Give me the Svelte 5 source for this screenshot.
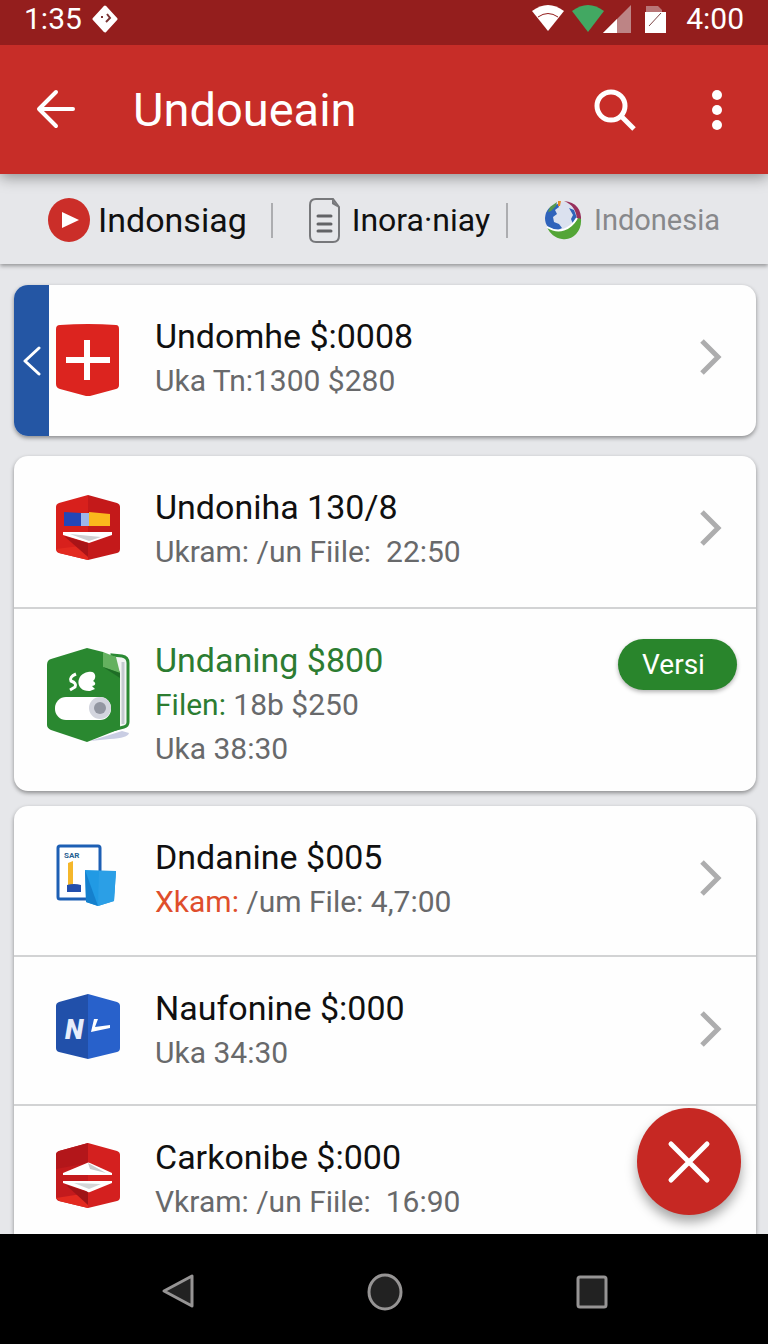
<script>
  const groups = [
    [
      { id: 'plus', title: 'Undomhe $:0008', swipe: true, lines: [[{ text: 'Uka Tn:1300 $280' }]] }
    ],
    [
      { id: 'flag', title: 'Undoniha 130/8', lines: [[{ text: 'Ukram: /un Fiile:\u00a0 22:50' }]] },
      {
        id: 'book',
        title: 'Undaning $800',
        green: true,
        tag: 'Versi',
        lines: [[{ text: 'Filen:', tone: 'green' }, { text: ' 18b $250' }], [{ text: 'Uka 38:30' }]]
      }
    ],
    [
      {
        id: 'page',
        title: 'Dndanine $005',
        lines: [[{ text: 'Xkam:', tone: 'orange' }, { text: ' /um File: 4,7:00' }]]
      },
      { id: 'nl', title: 'Naufonine $:000', lines: [[{ text: 'Uka 34:30' }]] },
      { id: 'layers', title: 'Carkonibe $:000', lines: [[{ text: 'Vkram: /un Fiile:\u00a0 16:90' }]] }
    ]
  ];
</script>

{#snippet hexagon(left, right)}
  <path d="M32 0 3 8Q0 9 0 12V54Q0 57 3 58L32 65Z" fill={left} />
  <path d="M32 0 61 8Q64 9 64 12V54Q64 57 61 58L32 65Z" fill={right} />
{/snippet}

{#snippet rowIcon(id)}
  {#if id === 'plus'}
    <svg width="64" height="72" viewBox="0 0 64 72" aria-hidden="true">
      <path d="M4 1Q32-1 60 1 63 1 63 5V61Q63 64 60 65L34 72Q32 72 30 72L4 65Q0 64 0 60V5Q0 1 4 1Z" fill="#dc241f" />
      <path d="M31 16V56M10 36H54" stroke="#fff" stroke-width="6" />
    </svg>
  {:else if id === 'flag'}
    <svg width="64" height="65" viewBox="0 0 64 65" aria-hidden="true">
      {@render hexagon('#d8201c', '#c4191a')}
      <path d="M0 54 32 50V65L3 58Z" fill="#e32a20" />
      <path d="M8 17 25 18V31H8Z" fill="#2346b8" />
      <path d="M25 18H33V31H25Z" fill="#9db7ea" />
      <path d="M33 17 54 19V31H33Z" fill="#fbb71c" />
      <path d="M7 37H56V40L33 48 7 40Z" fill="#fff" />
      <path d="M14 39 45 42 33 46Z" fill="#cfd0d2" />
      <path d="M8 41 32 48V62Z" fill="#a91417" />
    </svg>
  {:else if id === 'book'}
    <svg width="84" height="96" viewBox="0 0 84 96" aria-hidden="true">
      <path d="M44 94 76 84 83 86Q82 91 64 92Z" fill="#c9cde3" />
      <path d="M66 8 76 9Q82 10 82 16V75Q82 79 78 80L66 83Z" fill="#f2f5f3" stroke="#2b8a34" stroke-width="3" />
      <path d="M77 15V77" stroke="#c4cbd0" stroke-width="3" />
      <path d="M41 1 5 12Q1 13 1 18V78Q1 81 5 83L41 95 74 82V25L57 5Z" fill="#2a8830" />
      <path d="M57 5 70 10 74 26 57 20Z" fill="#64b15f" />
      <path d="M57 20 74 26V31Z" fill="#1e6d26" />
      <path d="M30 27Q23 30 25 34 31 36 29 40L24 43" fill="none" stroke="#fff" stroke-width="3" />
      <path d="M42 25C50 23 51 31 47 34 51 36 49 39 46 39L49 42 44 44C29 45 29 27 42 25Z" fill="#fff" />
      <rect x="9" y="50" width="56" height="23" rx="11" fill="#fff" />
      <circle cx="54" cy="61" r="11" fill="#d3d5de" />
      <circle cx="54" cy="61" r="6" fill="#9296a1" />
    </svg>
  {:else if id === 'page'}
    <svg width="64" height="64" viewBox="0 0 64 64" aria-hidden="true">
      <rect x="2" y="3" width="42" height="53" rx="2" fill="#fff" stroke="#1d5fb4" stroke-width="3" />
      <text x="8" y="15" font-size="8" font-weight="700" fill="#2a6293">SAR</text>
      <path d="M12 20 17 18V43H12Z" fill="#f5b72b" />
      <path d="M11 42Q18 40 25 42V49H11Z" fill="#234fad" />
      <path d="M29 27 60 28 58 58 42 63 30 59Z" fill="#219ae4" />
      <path d="M29 27 42 63 30 59Z" fill="#1580cd" />
      <path d="M43 28 60 28 58 58 42 63Z" fill="#2b9fe6" />
    </svg>
  {:else if id === 'nl'}
    <svg width="64" height="65" viewBox="0 0 64 65" aria-hidden="true">
      {@render hexagon('#2150aa', '#2861cb')}
      <text x="9" y="45" font-size="27" font-weight="900" font-style="italic" fill="#e7edfb">N</text>
      <path d="M38 25 35 38 54 34V31L39 33 42 25Z" fill="#fff" />
    </svg>
  {:else}
    <svg width="64" height="65" viewBox="0 0 64 65" aria-hidden="true">
      {@render hexagon('#c31a1d', '#d4201f')}
      <path d="M0 12Q0 9 3 8L32 0V20L0 26Z" fill="#b3161a" />
      <path d="M0 55 32 50V65L3 58Z" fill="#e32a20" />
      <path d="M7 30 31 20Q32 19 34 20L56 30V32H7Z" fill="#fff" />
      <path d="M32 20 50 30 34 26Z" fill="#c9cacc" />
      <path d="M7 38H56V40L34 49Q32 50 30 48L7 40Z" fill="#fff" />
      <path d="M18 40 45 41 33 46Z" fill="#d4d5d7" />
      <path d="M10 42 32 49V62Z" fill="#9f1417" />
    </svg>
  {/if}
{/snippet}

<div class="screen">
  <div class="status">
    <span>1:35</span>
    <svg class="diamond" width="26" height="28" viewBox="0 0 26 28" aria-hidden="true">
      <path d="M13 2 24 14 13 26 2 14Z" fill="#fff" stroke="#fff" stroke-width="3" stroke-linejoin="round" />
      <path d="M9 12H11M15 9 18 13 14 17" fill="none" stroke="#7a3434" stroke-width="2" />
    </svg>
    <svg class="signals" width="136" height="30" viewBox="0 0 136 30" aria-hidden="true">
      <path d="M1 7Q17-5 33 7L17 27Z" fill="#fff" />
      <path d="M7 13Q17 6 27 13" fill="none" stroke="#941e1d" stroke-width="1" />
      <path d="M41 7Q57-5 73 7L57 28Z" fill="#42a862" />
      <path d="M100 1V29H72Z" fill="#bd8485" />
      <path d="M86 15V29H72Z" fill="#fff" />
      <path d="M115 2H127L131 6V10H115Z" fill="#b97677" />
      <path d="M114 8H135V29H114Z" fill="#fff" />
      <path d="M118 22 130 9" stroke="#7d4646" stroke-width="1" />
    </svg>
    <span>4:00</span>
  </div>

  <header>
    <button class="icon back" aria-label="Back">
      <svg width="40" height="42" viewBox="0 0 40 42" fill="none" stroke="#fff" stroke-width="4" stroke-linecap="round" stroke-linejoin="round">
        <path d="M20 3 3 20 20 37M4 20H37" />
      </svg>
    </button>
    <h1>Undoueain</h1>
    <button class="icon" aria-label="Search">
      <svg width="44" height="44" viewBox="0 0 44 44" fill="none" stroke="#fff" stroke-width="5">
        <circle cx="19" cy="18" r="14" />
        <path d="M29 28 42 41" />
      </svg>
    </button>
    <button class="icon more" aria-label="More options">
      <svg width="12" height="42" viewBox="0 0 12 42" fill="#fff">
        <circle cx="6" cy="6" r="5" /><circle cx="6" cy="21" r="5" /><circle cx="6" cy="36" r="5" />
      </svg>
    </button>
  </header>

  <nav class="tabs">
    <a class="first" href="#play">
      <svg width="42" height="44" viewBox="0 0 42 44" aria-hidden="true">
        <ellipse cx="21" cy="22" rx="21" ry="22" fill="#cb2e29" />
        <path d="M14 14 31 22 14 30Z" fill="#fff" />
      </svg>
      <span>Indonsiag</span>
    </a>
    <a class="second" href="#notes">
      <svg width="31" height="45" viewBox="0 0 31 45" aria-hidden="true">
        <path d="M7 1H24L30 9V38Q30 44 24 44H7Q1 44 1 38V7Q1 1 7 1Z" fill="none" stroke="#77787b" stroke-width="2" />
        <path d="M23 1V6L30 10Z" fill="#77787b" />
        <path d="M9 18H22M9 26H22M9 33H22" stroke="#626366" stroke-width="3" stroke-linecap="round" />
      </svg>
      <span>Inora·niay</span>
    </a>
    <a class="muted" href="#region">
      <svg width="38" height="40" viewBox="0 0 38 40" aria-hidden="true">
        <circle cx="18" cy="19" r="17" fill="#dbe1ef" />
        <path d="M14 4Q2 6 1 18C1 26 6 31 14 30L18 28 15 24 10 22 9 17 13 14 11 10 15 7Z" fill="#2f63bb" />
        <path d="M25 8 30 10 33 18 29 24 27 19 29 15Z" fill="#2f63bb" />
        <path d="M4 12 6 7 13 2 12 6 7 11Z" fill="#55974d" />
        <path d="M14 1H17L16 6H14Z" fill="#e58b2c" />
        <path d="M20 1C32 2 38 10 37 21L33 19C32 10 29 5 20 1Z" fill="#98305c" />
        <path d="M3 27C15 34 27 30 34 18L37 19C38 31 29 41 18 39 11 38 6 34 3 27Z" fill="#53a536" />
        <path d="M3 27C15 34 26 30 33 18" fill="none" stroke="#fff" stroke-width="2" />
      </svg>
      <span>Indonesia</span>
    </a>
  </nav>

  <main>
    {#each groups as group}
      <ul>
        {#each group as item}
          <li>
            {#if item.swipe}
              <button class="swipe" aria-label="Previous">
                <svg width="18" height="30" viewBox="0 0 18 30" fill="none" stroke="#fff" stroke-width="3" stroke-linecap="round" stroke-linejoin="round">
                  <path d="M16 2 2 15 16 28" />
                </svg>
              </button>
            {/if}
            <a class="row" class:inset={!item.swipe} href={'#' + item.id}>
              <span class="pic" class:tall={item.id === 'book'} class:full={item.swipe}>{@render rowIcon(item.id)}</span>
              <span class="copy">
                <strong class:green={item.green}>{item.title}</strong>
                {#each item.lines as line}
                  <span class="line">{#each line as part}<span class={part.tone}>{part.text}</span>{/each}</span>
                {/each}
              </span>
              {#if !item.tag && item.id !== 'layers'}
                <svg class="chevron" width="24" height="38" viewBox="0 0 24 38" fill="none" stroke="#adadae" stroke-width="5" aria-hidden="true">
                  <path d="M3 3 19 19 3 35" />
                </svg>
              {/if}
            </a>
            {#if item.tag}<button class="tag">{item.tag}</button>{/if}
          </li>
        {/each}
      </ul>
    {/each}
    <button class="fab" aria-label="Close">
      <svg width="44" height="44" viewBox="0 0 44 44" stroke="#fff" stroke-width="5" stroke-linecap="round">
        <path d="M4 4 40 40M40 4 4 40" />
      </svg>
    </button>
  </main>

  <footer>
    <button aria-label="Back">
      <svg width="38" height="40" viewBox="0 0 38 40"><path d="M5 19 33 4V34Z" fill="#222" stroke="#969494" stroke-width="3" stroke-linejoin="round" /></svg>
    </button>
    <button aria-label="Home">
      <svg width="38" height="40" viewBox="0 0 38 40"><ellipse cx="19" cy="20" rx="16" ry="17" fill="#222" stroke="#969494" stroke-width="3" /></svg>
    </button>
    <button aria-label="Overview">
      <svg width="38" height="40" viewBox="0 0 38 40"><rect x="5" y="5" width="28" height="30" rx="2" fill="#222" stroke="#969494" stroke-width="3" /></svg>
    </button>
  </footer>
</div>

<style>
  :global(body) { background: #e6e7ea; }
  .screen {
    min-height: 100vh;
    display: flex;
    flex-direction: column;
    font-family: Roboto, "Liberation Sans", sans-serif;
    color: #101010;
    background: #e6e7ea;
  }
  svg { display: block; flex: none; }
  button { border: 0; padding: 0; background: none; color: inherit; font: inherit; cursor: pointer; }
  a { color: inherit; text-decoration: none; }

  .status {
    position: relative;
    z-index: 1;
    display: flex;
    align-items: center;
    height: 37px;
    padding: 0 24px 8px;
    background: #941e1d;
    color: #fff;
    font-size: 30px;
    line-height: 37px;
  }
  .diamond { margin-left: 10px; }
  .signals { margin: 0 19px 0 auto; }

  header {
    position: relative;
    display: flex;
    align-items: center;
    height: 129px;
    padding: 0 49px 0 24px;
    background: #c72d28;
    color: #fff;
    box-shadow: 0 3px 14px rgba(0, 0, 0, 0.4);
  }
  .icon { display: grid; place-items: center; width: 64px; height: 64px; }
  h1 { flex: 1; margin: 0 0 0 45px; font-size: 47px; line-height: 64px; font-weight: 400; }
  .more { width: 12px; margin-left: 65px; margin-right: -4px; }

  .tabs {
    display: flex;
    justify-content: space-between;
    align-items: center;
    height: 90px;
    padding: 2px 48px 0;
    box-sizing: border-box;
    background: #e6e7ea;
    box-shadow: 0 2px 4px rgba(0, 0, 0, 0.35);
    font-size: 34px;
    line-height: 44px;
  }
  .tabs a { display: flex; align-items: center; gap: 8px; }
  .first::after, .second::after { content: ""; width: 2px; height: 35px; background: #acadb0; }
  .first::after { margin-left: 16px; }
  .second::after { margin-left: 4px; }
  .tabs .second { gap: 12px; font-size: 32px; }
  .tabs .muted { gap: 12px; color: #87888b; font-size: 29px; }

  main {
    position: relative;
    flex: 1;
    display: flex;
    flex-direction: column;
    gap: 15px;
    padding: 21px 12px 0 14px;
  }
  ul {
    margin: 0;
    padding: 0;
    list-style: none;
    border-radius: 14px;
    background: #fefefe;
    box-shadow: 0 2px 4px rgba(0, 0, 0, 0.4);
    overflow: hidden;
  }
  ul:nth-of-type(2) { margin-top: 5px; }
  ul:nth-of-type(3) { flex: 1; border-radius: 14px 14px 0 0; }
  li { display: flex; min-height: 151px; box-sizing: border-box; }
  li + li { border-top: 2px solid #d2d3d4; }
  ul:nth-of-type(3) li { min-height: 149px; }
  ul:nth-of-type(3) li:last-child { min-height: 128px; }
  ul:nth-of-type(3) .pic { height: 138px; }
  .swipe { display: grid; place-items: center; width: 35px; background: #2456a4; }
  .row { flex: 1; display: flex; min-width: 0; }
  .inset { padding-left: 35px; }
  .pic {
    display: flex;
    justify-content: center;
    align-items: center;
    width: 78px;
    height: 142px;
    margin: 0 28px -16px 0;
  }
  .tall { height: 172px; }
  .full { height: 150px; }
  .copy { flex: 1; padding: 28px 0 0; }
  .copy strong, .line { display: block; white-space: nowrap; }
  .copy strong { font-size: 34px; line-height: 46px; font-weight: 400; }
  .line { font-size: 30px; line-height: 44px; color: #68696b; }
  .green, .copy .green { color: #2c7c31; }
  .orange { color: #df4e2c; }
  .chevron { margin: 53px 33px 0 0; }
  li:has(.tag) { min-height: 184px; }
  .tag {
    align-self: flex-start;
    width: 119px;
    height: 51px;
    margin: 30px 19px 0 0;
    border-radius: 26px;
    background: #29852c;
    color: #fff;
    font-size: 28px;
    line-height: 51px;
    padding-right: 8px;
    box-shadow: 0 2px 4px rgba(0, 0, 0, 0.3);
  }
  .fab {
    position: absolute;
    right: 27px;
    bottom: 19px;
    display: grid;
    place-items: center;
    width: 104px;
    height: 107px;
    border-radius: 50%;
    background: #c62823;
    box-shadow: 0 7px 12px rgba(0, 0, 0, 0.35);
  }

  footer {
    position: relative;
    display: flex;
    justify-content: space-between;
    align-items: center;
    height: 110px;
    padding: 5px 157px 0 159px;
    box-sizing: border-box;
    background: #000;
  }
</style>
